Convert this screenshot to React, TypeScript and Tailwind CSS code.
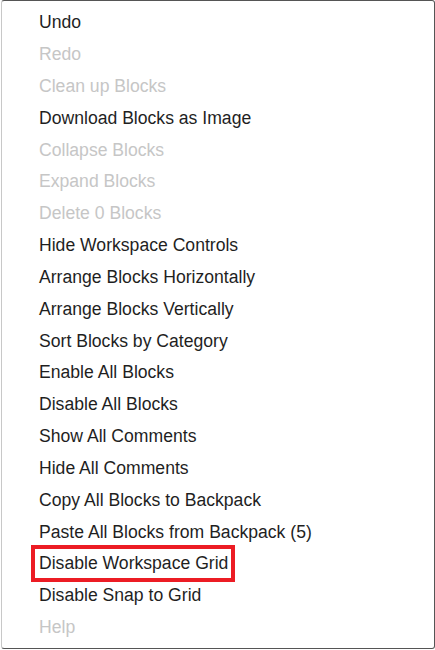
const items: { label: string; disabled?: boolean; marked?: boolean }[] = [
  { label: "Undo" },
  { label: "Redo", disabled: true },
  { label: "Clean up Blocks", disabled: true },
  { label: "Download Blocks as Image" },
  { label: "Collapse Blocks", disabled: true },
  { label: "Expand Blocks", disabled: true },
  { label: "Delete 0 Blocks", disabled: true },
  { label: "Hide Workspace Controls" },
  { label: "Arrange Blocks Horizontally" },
  { label: "Arrange Blocks Vertically" },
  { label: "Sort Blocks by Category" },
  { label: "Enable All Blocks" },
  { label: "Disable All Blocks" },
  { label: "Show All Comments" },
  { label: "Hide All Comments" },
  { label: "Copy All Blocks to Backpack" },
  { label: "Paste All Blocks from Backpack (5)" },
  { label: "Disable Workspace Grid", marked: true },
  { label: "Disable Snap to Grid" },
  { label: "Help", disabled: true },
];

export default function App() {
  return (
    <div className="w-[435px] h-[650px] bg-white" style={{ fontFamily: '"Liberation Sans", Arial, sans-serif' }}>
      <div className="w-[434px] h-[649px] border-t border-r border-b border-l border-t-[#555] border-r-[#555] border-b-[#555] border-l-[#c8c8c8] rounded-[3px] pt-[6px] ml-px">
        <ul>
          {items.map((it) => (
            <li key={it.label} className="h-[31.85px] flex items-center pl-[37px]">
              <span
                className={
                  "relative text-[17.6px] leading-none " +
                  (it.disabled ? "text-[#c6c6c6]" : "text-[#1f1f1f]")
                }
              >
                {it.label}
                {it.marked && (
                  <span className="absolute -left-[8px] -right-[7px] -top-[10px] -bottom-[9px] border-4 border-[#ec1c24]" />
                )}
              </span>
            </li>
          ))}
        </ul>
      </div>
    </div>
  );
}
